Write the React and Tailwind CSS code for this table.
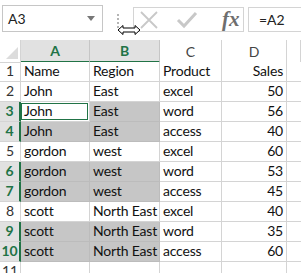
import React from 'react';

const rows = [
  ['Name', 'Region', 'Product', 'Sales'],
  ['John', 'East', 'excel', '50'],
  ['John', 'East', 'word', '56'],
  ['John', 'East', 'access', '40'],
  ['gordon', 'west', 'excel', '60'],
  ['gordon', 'west', 'word', '53'],
  ['gordon', 'west', 'access', '45'],
  ['scott', 'North East', 'excel', '40'],
  ['scott', 'North East', 'word', '35'],
  ['scott', 'North East', 'access', '60'],
  ['', '', '', ''],
];

const selected = [3, 4, 6, 7, 9, 10];

function ResizeCursor() {
  return (
    <svg width="24" height="12" viewBox="0 0 24 12" className="absolute left-[117px] top-[24px]">
      <path
        d="M1 6 L6 1.5 L6 4 L18 4 L18 1.5 L23 6 L18 10.5 L18 8 L6 8 L6 10.5 Z"
        fill="#fff"
        stroke="#000"
        strokeWidth="1"
        strokeLinejoin="miter"
      />
    </svg>
  );
}

function Toolbar() {
  return (
    <div className="relative flex h-[40px] items-start pt-[5px]">
      <div className="ml-[2px] flex h-[27px] w-[101px] items-center justify-between border border-[#c6c6c6] bg-white pl-[5px] pr-[7px]">
        <span className="text-[14px] text-[#222]">A3</span>
        <svg width="8" height="5" viewBox="0 0 8 5">
          <path d="M0 0 L8 0 L4 5 Z" fill="#777" />
        </svg>
      </div>
      <div className="ml-[14px] mt-[9px] flex flex-col gap-[2px]">
        <span className="h-[2px] w-[2px] bg-[#b5b5b5]" />
        <span className="h-[2px] w-[2px] bg-[#b5b5b5]" />
        <span className="h-[2px] w-[2px] bg-[#b5b5b5]" />
        <span className="h-[2px] w-[2px] bg-[#b5b5b5]" />
      </div>
      <div className="ml-[14px] mt-[2px] flex h-[25px] w-[111px] items-center border border-[#d4d4d4] bg-white">
        <svg width="20" height="20" viewBox="0 0 20 20" className="ml-[5px]">
          <path d="M2 2 L18 18 M18 2 L2 18" stroke="#c8c8c8" strokeWidth="1.8" />
        </svg>
        <svg width="22" height="18" viewBox="0 0 22 18" className="ml-[17px]">
          <path d="M2 9 L8 15 L20 2" stroke="#c8c8c8" strokeWidth="3" fill="none" />
        </svg>
        <span className="ml-[24px] font-['Liberation_Serif',serif] text-[21px] font-bold italic leading-none text-[#6e6e6e]">
          fx
        </span>
      </div>
      <div className="ml-[4px] mt-[2px] flex h-[25px] flex-1 items-center border border-[#d4d4d4] border-r-0 bg-white pl-[10px]">
        <span className="text-[14px] text-[#222]">=A2</span>
      </div>
      <ResizeCursor />
    </div>
  );
}

const cols = 'grid-cols-[21px_69px_70px_62px_65px_1fr]';

function Header() {
  return (
    <div className={`grid ${cols} h-[22px]`}>
      <div className="relative border-r border-b border-[#d4d4d4] bg-white">
        <svg width="12" height="12" viewBox="0 0 12 12" className="absolute bottom-[3px] right-[2px]">
          <path d="M12 0 L12 12 L0 12 Z" fill="#dcdcdc" />
        </svg>
      </div>
      {['A', 'B'].map((c) => (
        <div
          key={c}
          className="flex items-center justify-center border-r border-b-2 border-r-[#c6c6c6] border-b-[#217346] bg-[#e1e1e1] text-[14px] font-bold text-[#217346]"
        >
          {c}
        </div>
      ))}
      {['C', 'D', ''].map((c, i) => (
        <div
          key={i}
          className="flex items-center justify-center border-r border-b border-[#d4d4d4] bg-white text-[14px] text-[#444]"
        >
          {c}
        </div>
      ))}
    </div>
  );
}

function Row({ n, data }) {
  const sel = selected.includes(n);
  return (
    <div className={`grid ${cols} h-[20px]`}>
      <div
        className={`flex items-end justify-center border-b border-[#d4d4d4] pb-[1px] text-[14px] leading-[18px] ${
          sel
            ? 'border-r-2 border-r-[#217346] bg-[#e1e1e1] font-bold text-[#217346]'
            : 'border-r border-r-[#d4d4d4] bg-white text-[#333]'
        }`}
      >
        {n}
      </div>
      {data.map((v, i) => {
        const active = n === 3 && i === 0;
        const gray = sel && i < 2 && !active;
        return (
          <div
            key={i}
            className={`relative flex items-end overflow-visible whitespace-nowrap border-r border-b pb-[1px] text-[14px] leading-[18px] tracking-[-0.2px] text-[#111] ${
              i === 3 ? 'justify-end pr-[3px]' : 'pl-[3px]'
            } ${gray ? 'border-[#bcbcbc] bg-[#c6c6c6]' : 'border-[#d4d4d4] bg-white'}`}
          >
            {active && <div className="absolute inset-[1px] left-0 border border-[#217346]" />}
            <span className="relative">{v}</span>
          </div>
        );
      })}
      <div className="border-b border-[#d4d4d4] bg-white" />
    </div>
  );
}

export default function App() {
  return (
    <div className="h-[273px] w-[301px] overflow-hidden bg-white font-['Lato',sans-serif]">
      <Toolbar />
      <Header />
      {rows.map((r, i) => (
        <Row key={i} n={i + 1} data={r} />
      ))}
    </div>
  );
}
